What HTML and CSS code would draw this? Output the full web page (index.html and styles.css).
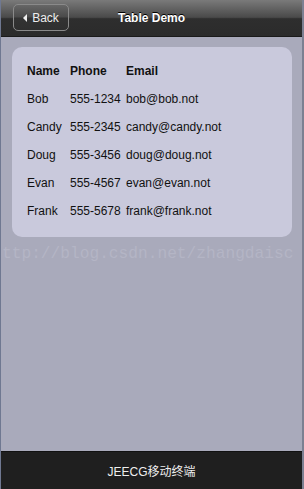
FILE: index.html
```html
<!DOCTYPE html>
<html lang="en">
<head>
    <meta charset="UTF-8">
    <meta name="viewport" content="width=device-width, initial-scale=1.0">
    <title>Table Demo</title>
    <link rel="stylesheet" href="styles.css">
</head>
<body>
    <div class="page">
        <div class="header">
            <a class="back-btn" href="#">
                <span class="arrow"></span>Back
            </a>
            <h1>Table Demo</h1>
        </div>

        <div class="content">
            <div class="card">
                <table>
                    <colgroup>
                        <col class="col-name">
                        <col class="col-phone">
                        <col>
                    </colgroup>
                    <thead>
                        <tr>
                            <th>Name</th>
                            <th>Phone</th>
                            <th>Email</th>
                        </tr>
                    </thead>
                    <tbody>
                        <tr><td>Bob</td><td>555-1234</td><td>bob@bob.not</td></tr>
                        <tr><td>Candy</td><td>555-2345</td><td>candy@candy.not</td></tr>
                        <tr><td>Doug</td><td>555-3456</td><td>doug@doug.not</td></tr>
                        <tr><td>Evan</td><td>555-4567</td><td>evan@evan.not</td></tr>
                        <tr><td>Frank</td><td>555-5678</td><td>frank@frank.not</td></tr>
                    </tbody>
                </table>
            </div>
            <div class="watermark">ttp://blog.csdn.net/zhangdaisc</div>
        </div>

        <div class="footer">JEECG移动终端</div>
    </div>
</body>
</html>
```

FILE: styles.css
```css
html, body {
    margin: 0;
    padding: 0;
    height: 100%;
}
body {
    font-family: "Liberation Sans", "Noto Sans CJK SC", sans-serif;
    font-size: 12px;
    color: #111;
    background-color: #a9aabb;
}
.page {
    display: flex;
    flex-direction: column;
    height: 100%;
    border-left: 1px solid #6f7891;
    border-right: 2px solid #7c8092;
    box-sizing: border-box;
}
.header {
    position: relative;
    height: 37px;
    display: flex;
    align-items: center;
    justify-content: center;
    background: linear-gradient(#7a7a7a, #4a4a4a 48%, #2e2e2e 52%, #2b2b2b);
    border-bottom: 1px solid #1a1a1a;
    box-sizing: border-box;
}
.header h1 {
    margin: 0;
    font-size: 12px;
    font-weight: bold;
    color: #fff;
    text-shadow: 0 -1px 0 #000;
}
.back-btn {
    position: absolute;
    left: 12px;
    top: 4px;
    width: 56px;
    height: 27px;
    display: flex;
    align-items: center;
    justify-content: center;
    gap: 5px;
    color: #eee;
    font-size: 12px;
    text-decoration: none;
    border: 1px solid #8a8a8a;
    border-radius: 5px;
    background: linear-gradient(#666, #4a4a4a 48%, #333 52%, #2f2f2f);
    box-sizing: border-box;
}
.arrow {
    width: 0;
    height: 0;
    border-top: 4px solid transparent;
    border-bottom: 4px solid transparent;
    border-right: 4px solid #eee;
}
.content {
    position: relative;
    flex: 1;
    padding: 10px 10px 0 11px;
    overflow: hidden;
}
.card {
    background-color: #c9c9dc;
    border-radius: 10px;
    padding: 10px 15px 12px;
}
table {
    border-collapse: collapse;
}
.col-name {
    width: 43px;
}
.col-phone {
    width: 56px;
}
th, td {
    text-align: left;
    height: 28px;
    padding: 0;
    white-space: nowrap;
}
th {
    font-weight: bold;
}
.watermark {
    position: absolute;
    left: 1px;
    top: 208px;
    font-family: "Liberation Mono", monospace;
    font-size: 16.2px;
    color: #b4b5c5;
    white-space: nowrap;
}
.footer {
    height: 38px;
    display: flex;
    align-items: center;
    justify-content: center;
    background-color: #1f1f1f;
    border-top: 1px solid #111;
    box-sizing: border-box;
    color: #eee;
    font-size: 12px;
}
```
